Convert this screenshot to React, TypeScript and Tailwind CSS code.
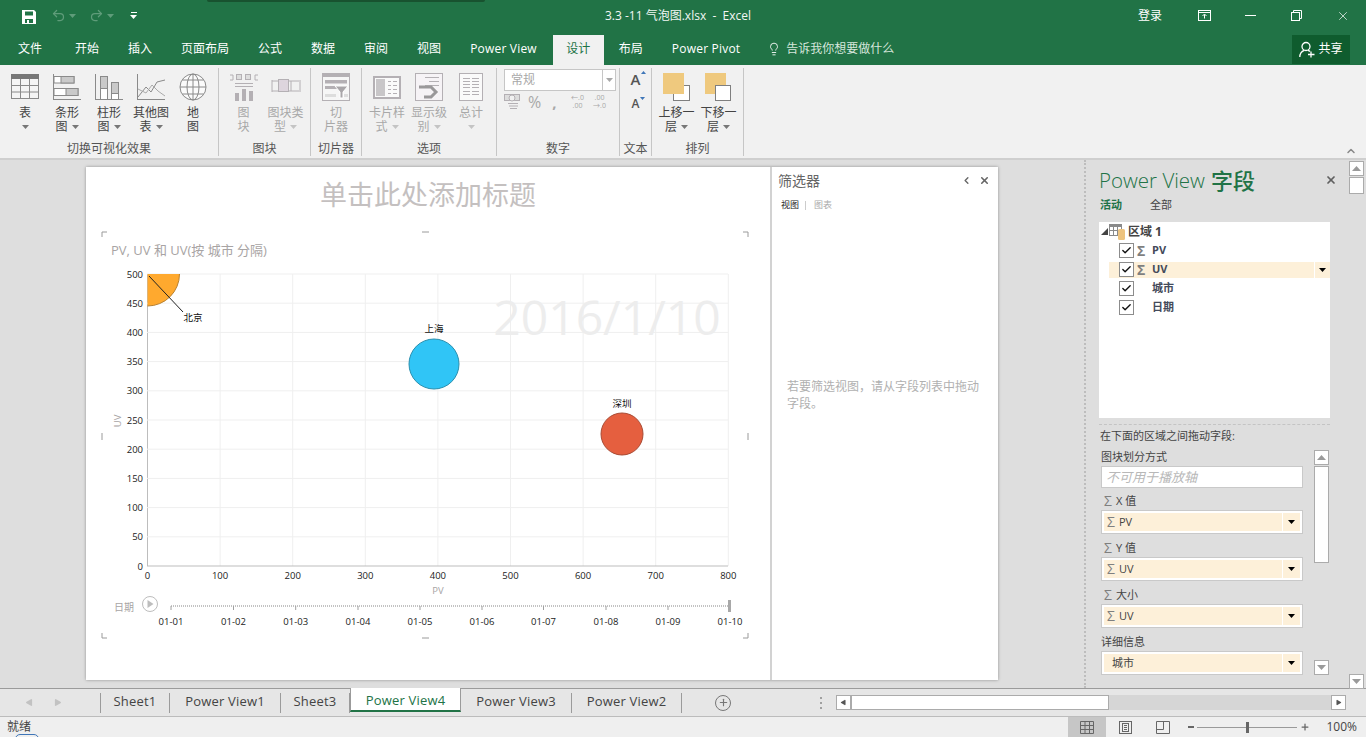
import type { ReactNode } from "react";
import { Check, ChevronLeft, ChevronUp, Lightbulb, Play, Plus, Redo2, Undo2, X } from "lucide-react";

const tabs = [
  { label: "文件", ml: "ml-[18px]" },
  { label: "开始", ml: "ml-[33px]" },
  { label: "插入", ml: "ml-[29px]" },
  { label: "页面布局", ml: "ml-[29px]" },
  { label: "公式", ml: "ml-[29px]" },
  { label: "数据", ml: "ml-[29px]" },
  { label: "审阅", ml: "ml-[29px]" },
  { label: "视图", ml: "ml-[29px]" },
];

const Caret = ({ className = "" }: { className?: string }) => (
  <svg width="7" height="4" viewBox="0 0 7 4" className={`inline-block ${className}`} fill="currentColor">
    <path d="M0 0h7L3.5 4z" />
  </svg>
);

function RibbonBtn({ icon, lines, caret, off, w = "w-[42px]" }: { icon: ReactNode; lines: string[]; caret?: boolean; off?: boolean; w?: string }) {
  const caretColor = off ? "text-[#c4c4c4]" : "text-[#777777]";
  return (
    <div className={`${w} flex flex-col items-center text-[12px] leading-[14px] ${off ? "text-[#a8a8a8]" : "text-[#444444]"}`}>
      <div className="h-[33px] flex items-start justify-center">{icon}</div>
      {lines.map((l, i) => (
        <div key={i} className="whitespace-nowrap">
          {l}
          {caret && i === lines.length - 1 && lines.length > 1 && <Caret className={`ml-1 mb-[2px] ${caretColor}`} />}
        </div>
      ))}
      {caret && lines.length === 1 && <Caret className={`mt-[5px] ${caretColor}`} />}
    </div>
  );
}

function Group({ label, w, children }: { label: string; w: string; children: ReactNode }) {
  return (
    <div className={`${w} h-[88px] border-r border-[#c6c6c6] flex flex-col`}>
      <div className="flex-1 flex justify-center min-h-0 pt-[5px]">{children}</div>
      <div className="text-center text-[12px] leading-[14px] text-[#555555]">{label}</div>
    </div>
  );
}

const g = "#8a8a8a";
const lg = "#b4b0b4";

const TableIcon = () => (
  <svg width="30" height="28" viewBox="0 0 30 28" fill="none" stroke={g}>
    <rect x="1.5" y="1.5" width="27" height="24" fill="#f5f5f5" />
    <rect x="1" y="1" width="28" height="5" fill="#777" stroke="none" />
    <path d="M1.5 12.5h27M1.5 19h27M10.5 6v19M19.5 6v19" />
  </svg>
);
const BarIcon = () => (
  <svg width="30" height="28" viewBox="0 0 30 28" fill="none" stroke={g}>
    <path d="M1.5 1v26M1 26.5h28" />
    <rect x="2" y="3.5" width="20" height="6.500" fill="#fff" />
    <rect x="9" y="3.5" width="13" height="6.500" fill="#c9c9c9" />
    <rect x="2" y="15.500" width="24" height="7" fill="#fff" />
    <rect x="14" y="15.500" width="12" height="7" fill="#c9c9c9" />
  </svg>
);
const ColumnIcon = () => (
  <svg width="30" height="28" viewBox="0 0 30 28" fill="none" stroke={g}>
    <path d="M1.500 1v26M1 26.500h28" />
    <rect x="6.500" y="3.500" width="7" height="23" fill="#fff" />
    <rect x="6.500" y="3.500" width="7" height="12" fill="#c9c9c9" />
    <rect x="17.500" y="9.500" width="7" height="17" fill="#fff" />
    <rect x="17.500" y="9.500" width="7" height="11" fill="#c9c9c9" />
  </svg>
);
const LineIcon = () => (
  <svg width="30" height="28" viewBox="0 0 30 28" fill="none" stroke={g}>
    <path d="M1.500 1v26M1 26.500h28" />
    <path d="M2 24l8-10 5 5 6-10 8-2" />
    <path d="M2 16l8 4 6-8 6 6 7 5" stroke="#aaa" />
  </svg>
);
const GlobeIcon = () => (
  <svg width="28" height="28" viewBox="0 0 28 28" fill="none" stroke={g}>
    <circle cx="14" cy="14" r="13" fill="#fbfbfb" />
    <ellipse cx="14" cy="14" rx="6" ry="13" />
    <path d="M14 1v26M1 14h26M3.500 7h21M3.500 21h21" />
  </svg>
);
const TileIcon = () => (
  <svg width="30" height="30" viewBox="0 0 30 30" fill="none" stroke={lg}>
    <path d="M1 2h3v5H1M29 2h-3v5h3" />
    <rect x="7.500" y="1.500" width="5" height="5" fill="#ddd" />
    <rect x="16.500" y="1.500" width="5" height="5" fill="#ddd" />
    <path d="M6 10.500h18M6 13.500h18" />
    <path d="M6 28v-8h4v8zM13 28V16h4v12zM20 28v-10h4v10z" fill={lg} stroke="none" />
  </svg>
);
const TileTypeIcon = () => (
  <svg width="30" height="22" viewBox="0 0 30 22" fill="none" stroke={lg} className="mt-[4px]">
    <path d="M1 3v12M29 3v12M1 4h27M1 14h27M20 4v10" />
    <rect x="7.500" y="2.500" width="10" height="12" fill="#ddd5dd" />
  </svg>
);
const SlicerIcon = () => (
  <svg width="28" height="28" viewBox="0 0 28 28" fill="none" stroke={lg}>
    <rect x="0.500" y="0.500" width="27" height="27" fill="#f6f6f6" />
    <rect x="0" y="0" width="28" height="4" fill={lg} stroke="none" />
    <path d="M3 7h22v3.500H3zM3 13h12v3H3z" fill={lg} stroke="none" />
    <path d="M13 13h13l-5 6v6h-3v-6z" fill="#a9a6a9" stroke="#fff" />
    <path d="M3 21h11v3H3zM22 21h4v3h-4z" fill="#ddd" stroke="none" />
  </svg>
);
const CardIcon = () => (
  <svg width="28" height="24" viewBox="0 0 28 24" fill="none" stroke={lg} className="mt-[3px]">
    <rect x="1" y="1" width="26" height="21" fill="#fafafa" strokeWidth="2" />
    <rect x="3" y="3" width="9" height="17" fill="#c8c6c8" stroke="none" />
    <path d="M15 5.500h3M20 5.500h4M15 9.500h3M20 9.500h4M15 13.500h3M20 13.500h4M15 17.500h3M20 17.500h4" />
  </svg>
);
const LevelIcon = () => (
  <svg width="28" height="28" viewBox="0 0 28 28" fill="none" stroke={lg}>
    <rect x="0.500" y="0.500" width="27" height="27" fill="#f6f3f6" />
    <path d="M10 4.500h14M14 8.500h10M10 12.500h14" />
    <path d="M4 14h12l5 5-5 5H9" stroke="#9a989a" strokeWidth="3" />
  </svg>
);
const TotalIcon = () => (
  <svg width="24" height="28" viewBox="0 0 24 28" fill="none" stroke={lg}>
    <rect x="0.500" y="0.500" width="23" height="27" fill="#fafafa" />
    <path d="M4 5.500h7M13 5.500h7M4 8.500h7M13 8.500h7M4 11.500h7M13 11.500h7M4 14.500h7M13 14.500h7M4 18.500h7M13 18.500h7M4 21.500h7M13 21.500h7" />
  </svg>
);
const MoveUpIcon = () => (
  <svg width="28" height="28" viewBox="0 0 28 28">
    <rect x="10.500" y="12.500" width="16" height="15" fill="#fff" stroke="#7f7f7f" />
    <rect x="0" y="0" width="21" height="21" fill="#efc97e" />
  </svg>
);
const MoveDownIcon = () => (
  <svg width="28" height="28" viewBox="0 0 28 28">
    <rect x="0" y="0" width="21" height="21" fill="#efc97e" />
    <rect x="10.500" y="12.500" width="15" height="15" fill="#fff" stroke="#7f7f7f" />
  </svg>
);

function Ribbon() {
  return (
    <div className="h-[95px] shrink-0 bg-[#f1f1f1] border-b-2 border-[#cfcfcf] flex items-start pt-[3px]">
      <Group label="切换可视化效果" w="w-[219px]">
        <RibbonBtn icon={<TableIcon />} lines={["表"]} caret />
        <RibbonBtn icon={<BarIcon />} lines={["条形", "图"]} caret />
        <RibbonBtn icon={<ColumnIcon />} lines={["柱形", "图"]} caret />
        <RibbonBtn icon={<LineIcon />} lines={["其他图", "表"]} caret />
        <RibbonBtn icon={<GlobeIcon />} lines={["地", "图"]} />
      </Group>
      <Group label="图块" w="w-[92px]">
        <RibbonBtn off icon={<TileIcon />} lines={["图", "块"]} />
        <RibbonBtn off icon={<TileTypeIcon />} lines={["图块类", "型"]} caret />
      </Group>
      <Group label="切片器" w="w-[51px]">
        <RibbonBtn off icon={<SlicerIcon />} lines={["切", "片器"]} />
      </Group>
      <Group label="选项" w="w-[135px]">
        <RibbonBtn off icon={<CardIcon />} lines={["卡片样", "式"]} caret />
        <RibbonBtn off icon={<LevelIcon />} lines={["显示级", "别"]} caret />
        <RibbonBtn off icon={<TotalIcon />} lines={["总计"]} caret />
      </Group>
      <Group label="数字" w="w-[123px]">
        <div className="flex flex-col w-[112px] ml-[4px] -mt-[4px]">
          <div className="h-[22px] bg-white border border-[#c6c6c6] flex items-center text-[12px] text-[#a8a8a8]">
            <span className="flex-1 pl-[6px]">常规</span>
            <span className="w-[13px] h-full border-l border-[#c6c6c6] flex items-center justify-center"><Caret /></span>
          </div>
          <div className="flex items-center h-[20px] mt-[1px] text-[#a8a8a8]">
            <svg width="16" height="16" viewBox="0 0 16 16" fill="none" stroke={lg}>
              <rect x="0.500" y="0.500" width="15" height="6" fill="#ddd" />
              <circle cx="8" cy="4" r="3" fill="#f1f1f1" />
              <path d="M4 9.500h10M5 12h9M6 14.500h7" />
            </svg>
            <span className="ml-[8px] text-[16px] leading-none">%</span>
            <span className="ml-[11px] text-[15px] font-bold leading-none">,</span>
            <span className="ml-[13px] text-[7px] leading-[8px] w-[16px] text-center">←.0<br />.00</span>
            <span className="ml-[6px] text-[7px] leading-[8px] w-[16px] text-center">.00<br />→.0</span>
          </div>
        </div>
      </Group>
      <Group label="文本" w="w-[32px]">
        <div className="flex flex-col items-center text-[#555555] font-semibold -mt-[3px]">
          <div className="relative text-[15px] leading-[18px]">A<span className="absolute -right-[6px] top-[1px]"><svg width="5" height="3" viewBox="0 0 5 3" fill="#3f76b8" className="block"><path d="M0 3h5L2.500 0z" /></svg></span></div>
          <div className="relative text-[12px] leading-[16px] mt-[8px]">A<span className="absolute -right-[6px] top-[1px]"><svg width="5" height="3" viewBox="0 0 5 3" fill="#3f76b8" className="block"><path d="M0 0h5L2.500 3z" /></svg></span></div>
        </div>
      </Group>
      <Group label="排列" w="w-[92px]">
        <RibbonBtn icon={<MoveUpIcon />} lines={["上移一", "层"]} caret />
        <RibbonBtn icon={<MoveDownIcon />} lines={["下移一", "层"]} caret />
      </Group>
    </div>
  );
}

const gridX = [0, 100, 200, 300, 400, 500, 600, 700, 800];
const gridY = [0, 50, 100, 150, 200, 250, 300, 350, 400, 450, 500];
const px = (v: number) => 147.5 + v * 0.726;
const py = (v: number) => 566 - v * 0.584;
const days = ["01-01", "01-02", "01-03", "01-04", "01-05", "01-06", "01-07", "01-08", "01-09", "01-10"];
const dayX = [171, 233.5, 295.7, 358, 420, 482, 543.500, 606, 668, 730];

function Chart() {
  const mark = "#9a9a9a";
  return (
    <svg width="684" height="430" viewBox="86 225 684 430" className="block">
      <path d={`M102 237v-5h5M743 232h5v5M102 633v5h5M743 638h5v-5M422 232h7M422 638h7M102 433v7M748 433v7`} fill="none" stroke={mark} />
      <text x="111" y="255" fontSize="13" fill="#a8a4a4">PV, UV 和 UV(按 城市 分隔)</text>
      {gridX.map(v => <line key={v} x1={px(v)} x2={px(v)} y1="274" y2="566" stroke={v === 0 ? "#bdbdbd" : "#efefef"} />)}
      {gridY.map(v => <line key={v} x1="147" x2="728" y1={py(v)} y2={py(v)} stroke={v === 0 ? "#bdbdbd" : "#efefef"} />)}
      {gridY.map(v => <text key={v} x="143" y={py(v) + 3.500} fontSize="9.500" textAnchor="end" fill="#222">{v}</text>)}
      {gridX.map(v => <text key={v} x={px(v)} y="579" fontSize="9.500" textAnchor="middle" fill="#222">{v}</text>)}
      <text x="438" y="594" fontSize="9.500" textAnchor="middle" fill="#a8a4a4">PV</text>
      <text x="121" y="421" fontSize="9.500" textAnchor="middle" fill="#a8a4a4" transform="rotate(-90 121 421)">UV</text>
      <text x="607" y="335" fontSize="48" textAnchor="middle" fill="#ededed">2016/1/10</text>
      <path d="M147.500 274h32a32 32 0 0 1-32 32z" fill="#ffa92e" />
      <path d="M179.500 274a32 32 0 0 1-32 32" fill="none" stroke="#b9812f" />
      <path d="M149 276l34 36" stroke="#222" />
      <text x="193" y="321" fontSize="9.500" textAnchor="middle" fill="#111">北京</text>
      <circle cx="434" cy="364" r="25" fill="#30c5f6" stroke="#2a8fae" />
      <text x="434" y="332" fontSize="9.500" textAnchor="middle" fill="#111">上海</text>
      <circle cx="622" cy="434" r="21" fill="#e55f3f" stroke="#a94a33" />
      <text x="622" y="407" fontSize="9.500" textAnchor="middle" fill="#111">深圳</text>
      <text x="124" y="611" fontSize="10" textAnchor="middle" fill="#a8a4a4">日期</text>
      <circle cx="150" cy="604" r="7.500" fill="#fff" stroke="#bdbdbd" />
      <path d="M147.500 600v8l6-4z" fill="#bdbdbd" />
      <line x1="171" x2="730" y1="606" y2="606" stroke="#b0b0b0" strokeDasharray="1 1" strokeWidth="1.500" />
      {dayX.map(x => <line key={x} x1={x} x2={x} y1="606" y2="610" stroke="#a0a0a0" />)}
      <rect x="728" y="600" width="3" height="12" fill="#a8a8a8" />
      {days.map((d, i) => <text key={d} x={dayX[i]} y="625" fontSize="9.500" textAnchor="middle" fill="#222">{d}</text>)}
    </svg>
  );
}

const Sigma = ({ className = "" }: { className?: string }) => <span className={`text-[#7f7f7f] ${className}`}>Σ</span>;

function FieldRow({ label, sigma, on }: { label: string; sigma?: boolean; on?: boolean }) {
  return (
    <div className="h-[19px] ml-[10px] flex items-center">
      <div className={`flex-1 h-[16px] flex items-center ${on ? "bg-[#fdf0d9]" : ""}`}>
        <div className="ml-[10px] w-[15px] h-[15px] border border-[#8c8c8c] bg-white flex items-center justify-center">
          <Check size={11} strokeWidth={3} color="#111" />
        </div>
        <span className="w-[14px] ml-[3px] text-[14px] leading-none font-bold">{sigma && <Sigma />}</span>
        <span className="ml-[1px] text-[11px] font-bold text-[#444a5a]">{label}</span>
        {on && (
          <span className="ml-auto w-[16px] h-full border-l border-white flex items-center justify-center text-black"><Caret /></span>
        )}
      </div>
    </div>
  );
}

function WellLabel({ sigma, children }: { sigma?: boolean; children: ReactNode }) {
  return (
    <div className="h-[13px] leading-[13px] mb-[3px] text-[11px] text-[#444444] flex items-center shrink-0">
      {sigma && <Sigma className="ml-[3px] mr-[4px] text-[14px]" />}
      {children}
    </div>
  );
}

function Well({ label, sigma }: { label: string; sigma?: boolean }) {
  return (
    <div className="w-[202px] h-[24px] bg-white border border-[#c9c9c9] p-[2px] mb-[7px] shrink-0">
      <div className="h-full bg-[#fdf0d9] flex items-center text-[11px] text-[#444444]">
        {sigma ? <Sigma className="ml-[3px] mr-[4px] text-[14px] leading-none" /> : <span className="w-[8px]" />}
        <span>{label}</span>
        <span className="ml-auto w-[18px] h-full border-l border-white flex items-center justify-center text-black"><Caret /></span>
      </div>
    </div>
  );
}

function ScrollBtn({ up, className = "" }: { up?: boolean; className?: string }) {
  return (
    <div className={`w-[15px] h-[15px] bg-white border border-[#ababab] flex items-center justify-center shrink-0 text-[#9a9a9a] ${className}`}>
      <svg width="9" height="5" viewBox="0 0 9 5" fill="currentColor"><path d={up ? "M0 5h9L4.500 0z" : "M0 0h9L4.500 5z"} /></svg>
    </div>
  );
}

function Pane() {
  return (
    <div className="w-[262px] shrink-0 border-l-2 border-dotted border-[#bdbdbd] pl-[13px] pb-[13px] flex flex-col h-full overflow-hidden">
      <div className="flex items-center h-[24px] mt-[8px] pr-[9px] whitespace-nowrap">
        <span className="text-[20.500px] font-light text-[#217346]">Power View</span>
        <span className="ml-[6px] text-[22px] text-[#217346] font-medium">字段</span>
        <X size={12} strokeWidth={3.500} className="ml-auto text-[#606060]" />
      </div>
      <div className="flex mt-[4px] h-[18px] items-center text-[11px]">
        <span className="ml-[1px] text-[#217346] font-bold">活动</span>
        <span className="ml-[28px] text-[#444444]">全部</span>
      </div>
      <div className="w-[231px] h-[196px] mt-[8px] bg-white shrink-0">
        <div className="h-[19px] flex items-center text-[#444444]">
          <svg width="7" height="7" viewBox="0 0 7 7" className="ml-[2px]"><path d="M7 0v7H0z" fill="#444" /></svg>
          <svg width="19" height="16" viewBox="0 0 19 16" fill="none" className="ml-[1px]">
            <rect x="0.500" y="1.500" width="12" height="10" fill="#fff" stroke="#8a8a8a" />
            <rect x="0" y="0" width="13" height="3" fill="#8a8a8a" />
            <path d="M0 6.500h12M4.500 3v8M8.500 3v8" stroke="#8a8a8a" />
            <rect x="9" y="5" width="7" height="11" rx="1.500" fill="#edc37e" />
          </svg>
          <span className="text-[12px] font-bold">区域 1</span>
        </div>
        <FieldRow label="PV" sigma />
        <FieldRow label="UV" sigma on />
        <FieldRow label="城市" />
        <FieldRow label="日期" />
      </div>
      <div className="w-[231px] mt-[6px] border-t border-dashed border-[#c4c4c4]" />
      <div className="text-[11px] text-[#444444] leading-[13px] mt-[4px] ml-[1px]">在下面的区域之间拖动字段:</div>
      <div className="flex mt-[8px] min-h-0 flex-1 pr-[17px]">
        <div className="w-[202px] ml-[2px] flex flex-col min-h-0 overflow-hidden">
          <WellLabel>图块划分方式</WellLabel>
          <div className="w-[202px] h-[22px] bg-white border border-[#c9c9c9] mb-[6px] shrink-0 text-[13px] italic text-[#b8b8b8] pl-[4px] leading-[20px]">不可用于播放轴</div>
          <WellLabel sigma>X 值</WellLabel>
          <Well label="PV" sigma />
          <WellLabel sigma>Y 值</WellLabel>
          <Well label="UV" sigma />
          <WellLabel sigma>大小</WellLabel>
          <Well label="UV" sigma />
          <WellLabel>详细信息</WellLabel>
          <Well label="城市" />
        </div>
        <div className="ml-[11px] w-[15px] flex flex-col shrink-0">
          <ScrollBtn up />
          <div className="h-[97px] mt-[1px] bg-white border border-[#ababab]" />
          <div className="flex-1" />
          <ScrollBtn />
        </div>
      </div>
    </div>
  );
}

function SheetTab({ label, w, active }: { label: string; w: string; active?: boolean }) {
  return active ? (
    <div className={`${w} h-[24px] self-start -mt-[1px] bg-white border-b-2 border-[#217346] border-l border-r border-l-[#9b9b9b] border-r-[#9b9b9b] text-center text-[13px] tracking-[0.2px] leading-[25px] text-[#217346]`}>{label}</div>
  ) : (
    <div className={`${w} h-[20px] leading-[16px] text-[13px] tracking-[0.2px] text-center text-[#444444] border-r border-[#9b9b9b] whitespace-nowrap`}>{label}</div>
  );
}

export default function App() {
  return (
    <div className="relative w-[1366px] h-[737px] overflow-hidden flex flex-col bg-[#dedede] font-['Open_Sans','Noto_Sans_CJK_SC',sans-serif]">
      <div className="h-[35px] bg-[#217346] flex items-center pb-[4px] text-white shrink-0">
        <div className="absolute top-0 left-[207px] w-[278px] h-[2px] bg-[#18522f] rounded-b-sm" />
        <svg width="16" height="16" viewBox="0 0 16 16" className="ml-[21px] mt-[3px]" fill="#fff">
          <path fillRule="evenodd" d="M1 1h12l2 2v12H1zM4 2.500v4h8v-4zM4 10v4h2v-3h2v3h4v-4z" />
        </svg>
        <Undo2 size={15} className="ml-[14px] text-[#5f9c7a]" />
        <Caret className="ml-[3px] text-[#5f9c7a]" />
        <Redo2 size={15} className="ml-[13px] text-[#5f9c7a]" />
        <Caret className="ml-[3px] text-[#5f9c7a]" />
        <div className="ml-[16px] flex flex-col items-center gap-[2px]">
          <div className="w-[6px] h-[1px] bg-white" />
          <Caret className="text-white" />
        </div>
        <div className="ml-[468px] text-[12px] whitespace-pre text-[#f2f7f4]">3.3 -11 气泡图.xlsx  -  Excel</div>
        <div className="ml-auto flex items-center">
          <span className="text-[12px]">登录</span>
          <svg width="14" height="11" viewBox="0 0 14 11" className="ml-[36px]" fill="none" stroke="#fff">
            <rect x="0.500" y="0.500" width="12" height="10" />
            <path d="M0.500 2.500h12M6.500 8.500V4.500M4.500 6l2-2 2 2" />
          </svg>
          <div className="ml-[33px] w-[11px] h-[1px] bg-white" />
          <svg width="11" height="11" viewBox="0 0 11 11" className="ml-[35px]" fill="none" stroke="#fff">
            <rect x="0.500" y="2.500" width="8" height="8" />
            <path d="M2.500 2.500v-2h8v8h-2" />
          </svg>
          <X size={14} strokeWidth={1.200} className="ml-[34px] mr-[16px]" />
        </div>
      </div>

      <div className="h-[30px] bg-[#217346] flex items-center pb-[2px] text-white text-[12px] shrink-0">
        {tabs.map(t => <span key={t.label} className={`${t.ml} whitespace-nowrap`}>{t.label}</span>)}
        <span className="ml-[29px] whitespace-nowrap tracking-[0.2px]">Power View</span>
        <div className="ml-[16px] w-[51px] h-[30px] -mb-[2px] pb-[2px] bg-[#f1f1f1] text-[#217346] flex items-center justify-center">设计</div>
        <span className="ml-[15px]">布局</span>
        <span className="ml-[29px] whitespace-nowrap tracking-[0.2px]">Power Pivot</span>
        <Lightbulb size={14} strokeWidth={1.500} className="ml-[27px]" />
        <span className="ml-[5px] text-[#d6e6dc]">告诉我你想要做什么</span>
        <div className="ml-auto mr-[16px] w-[58px] h-[29px] bg-[#0f5c2e] flex items-center justify-center gap-[3px]">
          <svg width="16" height="17" viewBox="0 0 16 17" fill="none" stroke="#fff" strokeWidth="1.300">
            <circle cx="7" cy="5.500" r="4" />
            <path d="M0.800 16c0-3.500 2-5.800 4.500-6.700M9 9.300c.8.300 1.500.7 2 1.200M12 10.500v6M9 13.500h6.500" />
          </svg>
          <span>共享</span>
        </div>
      </div>

      <Ribbon />

      <div className="flex-1 min-h-0 flex">
        <div className="w-[1084px] shrink-0 pl-[86px] pt-[7px]">
          <div className="w-[912px] h-[513px] bg-white shadow-[0_0_3px_rgba(0,0,0,0.35)] flex">
            <div className="w-[684px] flex flex-col">
              <div className="h-[58px] flex items-start justify-center pt-[9px] text-[27px] leading-[38px] text-[#c4c0c0]">单击此处添加标题</div>
              <Chart />
            </div>
            <div className="flex-1 border-l-2 border-[#d2d2d2] pl-[6px] pr-[8px] flex flex-col">
              <div className="flex items-center h-[26px] text-[#666666]">
                <span className="text-[14px]">筛选器</span>
                <ChevronLeft size={11} strokeWidth={3} className="ml-auto" />
                <X size={11} strokeWidth={3.500} className="ml-[7px]" />
              </div>
              <div className="flex items-center text-[9px] mt-[5px] ml-[3px] leading-[14px]">
                <span className="text-[#222222]">视图</span>
                <span className="ml-[6px] mr-[8px] w-[1px] h-[9px] bg-[#cccccc]" />
                <span className="text-[#aaaaaa]">图表</span>
              </div>
              <div className="mt-[166px] ml-[9px] w-[200px] text-[12px] leading-[17px] text-[#b0b0b0]">若要筛选视图，请从字段列表中拖动字段。</div>
            </div>
          </div>
        </div>
        <Pane />
        <div className="flex-1 flex flex-col items-center pt-[1px]">
          <ChevronUp size={12} strokeWidth={3} className="absolute top-[145px] right-[9px] text-[#888888]" />
          <ScrollBtn up />
          <div className="w-[15px] h-[17px] mt-[1px] bg-white border border-[#ababab]" />
          <div className="flex-1" />
          <ScrollBtn className="relative -mb-[1px]" />
        </div>
      </div>

      <div className="h-[29px] bg-[#e6e6e6] flex items-center border-t border-b border-t-[#9b9b9b] border-b-[#bcbcbc] shrink-0">
        <Play size={9} fill="#c2c2c2" stroke="none" className="ml-[25px] rotate-180" />
        <Play size={9} fill="#c2c2c2" stroke="none" className="ml-[19px]" />
        <div className="ml-[38px] h-[20px] border-l border-[#9b9b9b]" />
        <SheetTab label="Sheet1" w="w-[69px]" />
        <SheetTab label="Power View1" w="w-[111px]" />
        <SheetTab label="Sheet3" w="w-[69px]" />
        <SheetTab label="Power View4" w="w-[111px]" active />
        <SheetTab label="Power View3" w="w-[111px]" />
        <SheetTab label="Power View2" w="w-[110px]" />
        <div className="ml-[33px] w-[16px] h-[16px] rounded-full border border-[#777777] flex items-center justify-center">
          <Plus size={11} strokeWidth={2.500} className="text-[#777777]" />
        </div>
        <div className="ml-[89px] flex flex-col gap-[3px]">
          <div className="w-[2px] h-[2px] bg-[#a0a0a0]" />
          <div className="w-[2px] h-[2px] bg-[#a0a0a0]" />
          <div className="w-[2px] h-[2px] bg-[#a0a0a0]" />
        </div>
        <div className="ml-[14px] w-[510px] h-[15px] bg-[#d6d6d6] flex items-center">
          <div className="w-[15px] h-[15px] bg-white border border-[#ababab] flex items-center justify-center"><Play size={7} fill="#555" stroke="none" className="rotate-180" /></div>
          <div className="w-[258px] h-[15px] bg-white border border-[#ababab]" />
          <div className="ml-auto w-[15px] h-[15px] bg-white border border-[#ababab] flex items-center justify-center"><Play size={7} fill="#555" stroke="none" /></div>
        </div>
      </div>

      <div className="h-[20px] bg-[#efefef] flex items-center text-[12px] text-[#444444] shrink-0 relative overflow-hidden">
        <span className="ml-[7px]">就绪</span>
        <div className="absolute left-[15px] top-[17px] w-[24px] h-[10px] rounded-full border border-[#3f76b8]" />
        <div className="ml-auto w-[38px] h-[20px] bg-[#c6c6c6] flex items-center justify-center">
          <svg width="14" height="13" viewBox="0 0 14 13" fill="none" stroke="#666"><path d="M.5.500h13v12H.5zM.5 4.500h13M.5 8.500h13M5 .5v12M9.500 .5v12" /></svg>
        </div>
        <svg width="13" height="13" viewBox="0 0 13 13" className="ml-[13px]" fill="none" stroke="#666"><rect x="0.500" y="0.500" width="12" height="12" /><rect x="3.500" y="2.500" width="6" height="8" /><path d="M5 4.500h3M5 6.500h3M5 8.500h3" /></svg>
        <svg width="14" height="13" viewBox="0 0 14 13" className="ml-[24px]" fill="none" stroke="#666"><path d="M.5.500h13v12H.5zM.5 8.500h7M7.500.500v8" /></svg>
        <div className="ml-[18px] w-[6px] h-[2px] bg-[#666666]" />
        <div className="ml-[3px] w-[100px] h-[1px] bg-[#9a9a9a] flex items-center justify-center">
          <div className="w-[3px] h-[11px] bg-[#666666] shrink-0" />
        </div>
        <Plus size={10} strokeWidth={3} className="ml-[3px] text-[#666666]" />
        <span className="ml-[16px] mr-[9px]">100%</span>
      </div>
    </div>
  );
}
